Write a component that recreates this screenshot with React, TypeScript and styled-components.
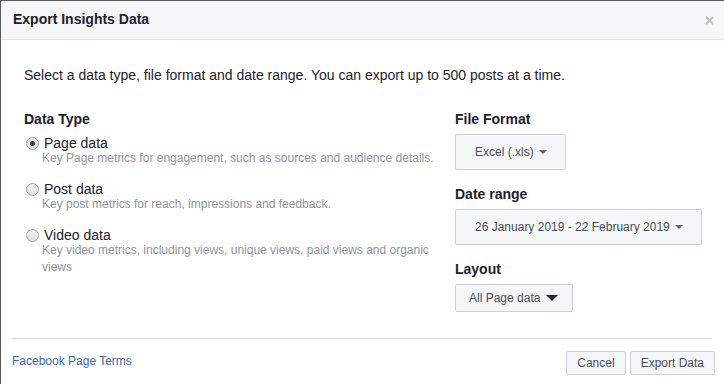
import React from 'react';
import styled, {createGlobalStyle} from 'styled-components';

const GlobalStyle = createGlobalStyle({
  "html, body" : {
    margin: 0,
    padding: 0,
    background: "#ffffff",
    overflow: "hidden",
  },
  body : {
    fontFamily: "'Liberation Sans', Arial, sans-serif",
    color: "#1d2129",
  },
})

const Dialog = styled.div({
  width: "723px",
  height: "383px",
  borderLeft: "1px solid #5b5b5b",
  borderTop: "1px solid #5b5b5b",
  background: "#ffffff",
  display: "flex",
  flexDirection: "column",
})

const Header = styled.div({
  height: "39px",
  background: "#f5f6f7",
  borderBottom: "1px solid #e5e5e5",
  display: "flex",
  alignItems: "center",
  justifyContent: "space-between",
  padding: "0 10px 3px 12px",
  boxSizing: "border-box",
})

const Title = styled.div({
  fontSize: "14px",
  fontWeight: 700,
  lineHeight: "16px",
  color: "#1d2129",
})

const Close = styled.svg({
  width: "9px",
  height: "9px",
  marginTop: "3px",
})

const Body = styled.div({
  padding: "0 16px 26px 23px",
})

const Intro = styled.p({
  margin: "26px 0 27px 0",
  fontSize: "14px",
  lineHeight: "18px",
  color: "#1d2129",
})

const Columns = styled.div({
  display: "grid",
  gridTemplateColumns: "431px 1fr",
})

const Column = styled.div({
  display: "flex",
  flexDirection: "column",
})

const Label = styled.div({
  fontSize: "14px",
  fontWeight: 700,
  lineHeight: "16px",
  marginBottom: "7px",
})

const Section = styled.div<{last?: boolean}>`
  display: flex;
  flex-direction: column;
  align-items: flex-start;
  margin-bottom: ${p => p.last ? "0" : "16px"};
`

const OptionList = styled.div({
  display: "flex",
  flexDirection: "column",
  gap: "14px",
  marginTop: "1px",
})

const Option = styled.label({
  display: "flex",
  flexDirection: "column",
})

const OptionHead = styled.div({
  display: "flex",
  alignItems: "center",
  fontSize: "14px",
  lineHeight: "16px",
  color: "#1d2129",
})

const Radio = styled.span<{checked?: boolean}>`
  width: 11px;
  height: 11px;
  margin: 0 5px 0 2px;
  border-radius: 50%;
  border: 1px solid #a3a3a3;
  background: linear-gradient(#f4f4f4, #dedede);
  display: flex;
  align-items: center;
  justify-content: center;
  &::after {
    content: "";
    width: 5px;
    height: 5px;
    border-radius: 50%;
    background: ${p => p.checked ? "#3a3a3a" : "transparent"};
  }
`

const Desc = styled.div({
  paddingLeft: "18px",
  marginTop: "-1px",
  fontSize: "12px",
  lineHeight: "17px",
  color: "#90949c",
  maxWidth: "400px",
})

const Select = styled.button<{tall?: boolean}>`
  height: ${p => p.tall ? "36px" : "28px"};
  padding: ${p => p.tall ? "0 18px 0 19px" : "0 14px 0 13px"};
  background: #f5f6f7;
  border: 1px solid #ccd0d5;
  border-radius: 2px;
  font-family: 'Liberation Sans', Arial, sans-serif;
  font-size: 12px;
  color: #4b4f56;
  white-space: nowrap;
  display: flex;
  align-items: center;
`

const Caret = styled.span<{big?: boolean}>`
  margin-left: ${p => p.big ? "6px" : "5px"};
  width: 0;
  height: 0;
  border-left: ${p => p.big ? "6px" : "4px"} solid transparent;
  border-right: ${p => p.big ? "6px" : "4px"} solid transparent;
  border-top: ${p => p.big ? "6px" : "4px"} solid ${p => p.big ? "#1d2129" : "#606770"};
`

const Footer = styled.div({
  margin: "0 12px 0 11px",
  borderTop: "1px solid #dddfe2",
  paddingTop: "12px",
  display: "flex",
  justifyContent: "space-between",
  alignItems: "flex-start",
})

const TermsLink = styled.a({
  color: "#4267b2",
  fontSize: "12px",
  lineHeight: "16px",
  marginTop: "2px",
  textDecoration: "none",
})

const Actions = styled.div({
  display: "flex",
  gap: "4px",
  marginRight: "-3px",
})

const Button = styled.button({
  height: "24px",
  padding: "0 10px",
  background: "#f5f6f7",
  border: "1px solid #ccd0d5",
  borderRadius: "2px",
  fontFamily: "'Liberation Sans', Arial, sans-serif",
  fontSize: "12px",
  color: "#4b4f56",
})

const options = [
  {name: "Page data", desc: "Key Page metrics for engagement, such as sources and audience details.", checked: true},
  {name: "Post data", desc: "Key post metrics for reach, impressions and feedback.", checked: false},
  {name: "Video data", desc: "Key video metrics, including views, unique views, paid views and organic views", checked: false},
]

function App() {
  return (
    <>
      <GlobalStyle />
      <Dialog>
        {/* Title bar */}
        <Header>
          <Title>Export Insights Data</Title>
          <Close viewBox="0 0 9 9">
            <path d="M1 1L8 8M8 1L1 8" stroke="#bec2c9" strokeWidth="2" />
          </Close>
        </Header>

        <Body>
          <Intro>Select a data type, file format and date range. You can export up to 500 posts at a time.</Intro>
          <Columns>
            {/* Data type radios */}
            <Column>
              <Label>Data Type</Label>
              <OptionList>
                {options.map(o => (
                  <Option key={o.name}>
                    <OptionHead>
                      <Radio checked={o.checked} />
                      {o.name}
                    </OptionHead>
                    <Desc>{o.desc}</Desc>
                  </Option>
                ))}
              </OptionList>
            </Column>

            {/* Format / range / layout */}
            <Column>
              <Section>
                <Label>File Format</Label>
                <Select tall>Excel (.xls)<Caret /></Select>
              </Section>
              <Section>
                <Label>Date range</Label>
                <Select tall>26 January 2019 - 22 February 2019<Caret /></Select>
              </Section>
              <Section last>
                <Label>Layout</Label>
                <Select>All Page data<Caret big /></Select>
              </Section>
            </Column>
          </Columns>
        </Body>

        <Footer>
          <TermsLink href="#">Facebook Page Terms</TermsLink>
          <Actions>
            <Button>Cancel</Button>
            <Button>Export Data</Button>
          </Actions>
        </Footer>
      </Dialog>
    </>
  );
}

export default App;
